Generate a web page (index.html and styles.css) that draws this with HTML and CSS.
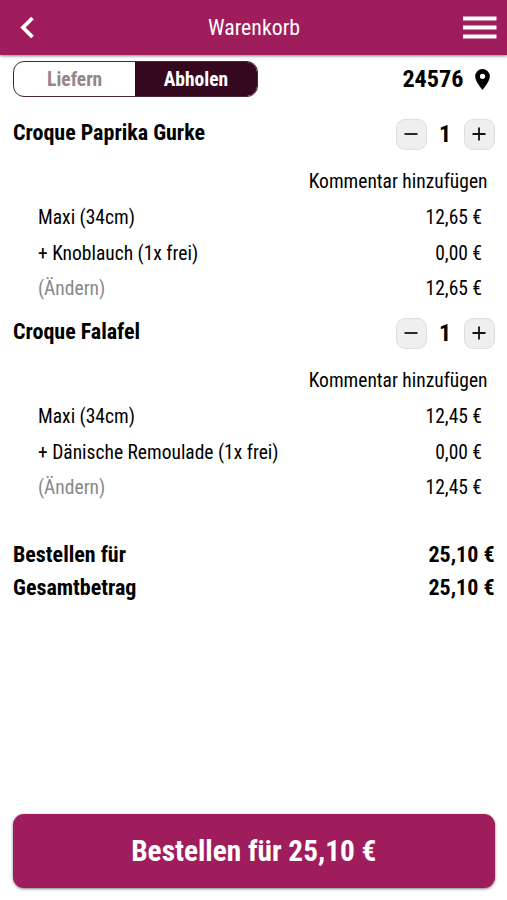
FILE: index.html
```html
<!DOCTYPE html>
<html lang="de">
<head>
  <meta charset="UTF-8">
  <meta name="viewport" content="width=device-width, initial-scale=1.0">
  <title>Warenkorb</title>
  <link rel="stylesheet" href="styles.css">
</head>
<body>

<header class="header">
  <button class="header-button" aria-label="Zurück">
    <svg width="15" height="22" viewBox="0 0 15 22"><path d="M12.500 2 3 11.500l9.500 9.500" fill="none" stroke="#fff" stroke-width="3.800"/></svg>
  </button>
  <h1>Warenkorb</h1>
  <button class="header-button" aria-label="Menü">
    <svg width="34" height="24" viewBox="0 0 34 24"><path d="M0 3.500h33.500M0 12.500h33.500M0 21.500h33.500" stroke="#fff" stroke-width="4"/></svg>
  </button>
</header>

<main>
  <div class="delivery">
    <div class="tabs">
      <button>Liefern</button>
      <button class="active">Abholen</button>
    </div>
    <div class="location">
      <span>24576</span>
      <svg width="15" height="21" viewBox="0 0 14 20"><path fill-rule="evenodd" d="M7 0a7 7 0 0 0-7 7c0 5.200 7 13 7 13s7-7.800 7-13a7 7 0 0 0-7-7zm0 4.500a2.500 2.500 0 1 1 0 5 2.500 2.500 0 0 1 0-5z"/></svg>
    </div>
  </div>

  <section class="item">
    <div class="item-head">
      <h2>Croque Paprika Gurke</h2>
      <div class="stepper">
        <button aria-label="Weniger"><svg width="14" height="14" viewBox="0 0 14 14"><path d="M.5 7h13"/></svg></button>
        <span>1</span>
        <button aria-label="Mehr"><svg width="14" height="14" viewBox="0 0 14 14"><path d="M.5 7h13M7 .5v13"/></svg></button>
      </div>
    </div>
    <div class="comment">Kommentar hinzufügen</div>
    <div class="row"><span>Maxi (34cm)</span><span>12,65 €</span></div>
    <div class="row"><span>+ Knoblauch (1x frei)</span><span>0,00 €</span></div>
    <div class="row"><span class="edit">(Ändern)</span><span>12,65 €</span></div>
  </section>

  <section class="item">
    <div class="item-head">
      <h2>Croque Falafel</h2>
      <div class="stepper">
        <button aria-label="Weniger"><svg width="14" height="14" viewBox="0 0 14 14"><path d="M.5 7h13"/></svg></button>
        <span>1</span>
        <button aria-label="Mehr"><svg width="14" height="14" viewBox="0 0 14 14"><path d="M.5 7h13M7 .5v13"/></svg></button>
      </div>
    </div>
    <div class="comment">Kommentar hinzufügen</div>
    <div class="row"><span>Maxi (34cm)</span><span>12,45 €</span></div>
    <div class="row"><span>+ Dänische Remoulade (1x frei)</span><span>0,00 €</span></div>
    <div class="row"><span class="edit">(Ändern)</span><span>12,45 €</span></div>
  </section>

  <div class="totals">
    <div class="total"><span>Bestellen für</span><span>25,10 €</span></div>
    <div class="total"><span>Gesamtbetrag</span><span>25,10 €</span></div>
  </div>

  <button class="order-button">Bestellen für 25,10 €</button>
</main>

</body>
</html>
```
FILE: styles.css
```css
* {
  box-sizing: border-box;
}

body {
  display: flex;
  flex-direction: column;
  height: 100vh;
  margin: 0;
  background-color: #fff;
  color: #000;
  font-family: "Roboto Condensed", Roboto, sans-serif;
  font-stretch: 75%;
  font-size: 19.5px;
}

button {
  padding: 0;
  border: none;
  background: none;
  color: inherit;
  font: inherit;
  font-stretch: inherit;
  cursor: pointer;
}

h1,
h2 {
  margin: 0;
}

.header {
  display: flex;
  justify-content: space-between;
  align-items: center;
  height: 54.5px;
  flex-shrink: 0;
  padding: 0 10px 0 20px;
  background-color: #9f1d5c;
  color: white;
  box-shadow: 0 1px 3px rgba(0, 0, 0, 0.5);
}

.header h1 {
  margin-right: 9px;
  font-size: 21.8px;
  font-weight: 400;
}

.header-button {
  display: flex;
  width: 34px;
}

main {
  display: flex;
  flex-direction: column;
  flex-grow: 1;
  padding: 6.5px 12.5px 12.5px 13px;
}

.delivery {
  display: flex;
  justify-content: space-between;
  align-items: center;
  height: 36px;
  margin-bottom: 17px;
}

.tabs {
  display: flex;
  width: 244.5px;
  height: 36.5px;
  overflow: hidden;
  border: 1px solid #4d2339;
  border-radius: 11px;
}

.tabs button {
  flex: 1;
  color: #978589;
  font-weight: 700;
}

.tabs button.active {
  background-color: #35081f;
  color: white;
}

.location {
  display: flex;
  align-items: center;
  gap: 11px;
  padding-right: 5px;
  font-size: 24.2px;
  font-weight: 700;
}

.item {
  height: 199px;
}

.item-head {
  display: flex;
  justify-content: space-between;
  height: 49px;
}

h2 {
  font-size: 22px;
  font-weight: 700;
  line-height: 38px;
}

.stepper {
  display: flex;
  align-items: center;
  height: 31px;
  margin-top: 4.5px;
}

.stepper button {
  display: flex;
  justify-content: center;
  align-items: center;
  width: 31px;
  height: 31px;
  border: 1px solid #dedede;
  border-radius: 9px;
  background-color: #efefef;
}

.stepper path {
  stroke: #111;
  stroke-width: 1.8;
}

.stepper span {
  width: 37px;
  text-align: center;
  font-size: 24px;
  font-weight: 700;
}

.comment {
  padding-right: 7px;
  line-height: 37px;
  text-align: right;
}

.row {
  display: flex;
  justify-content: space-between;
  padding: 0 12.5px 0 25px;
  line-height: 35.5px;
}

.edit {
  color: #888;
}

.totals {
  margin-top: 26px;
  font-size: 22px;
  font-weight: 700;
}

.total {
  display: flex;
  justify-content: space-between;
  line-height: 33px;
}

.order-button {
  height: 73.5px;
  margin-top: auto;
  border-radius: 11px;
  background-color: #9f1d5c;
  color: white;
  font-size: 29.3px;
  font-weight: 700;
  box-shadow: 0 1px 3px rgba(0, 0, 0, 0.5);
}
```
